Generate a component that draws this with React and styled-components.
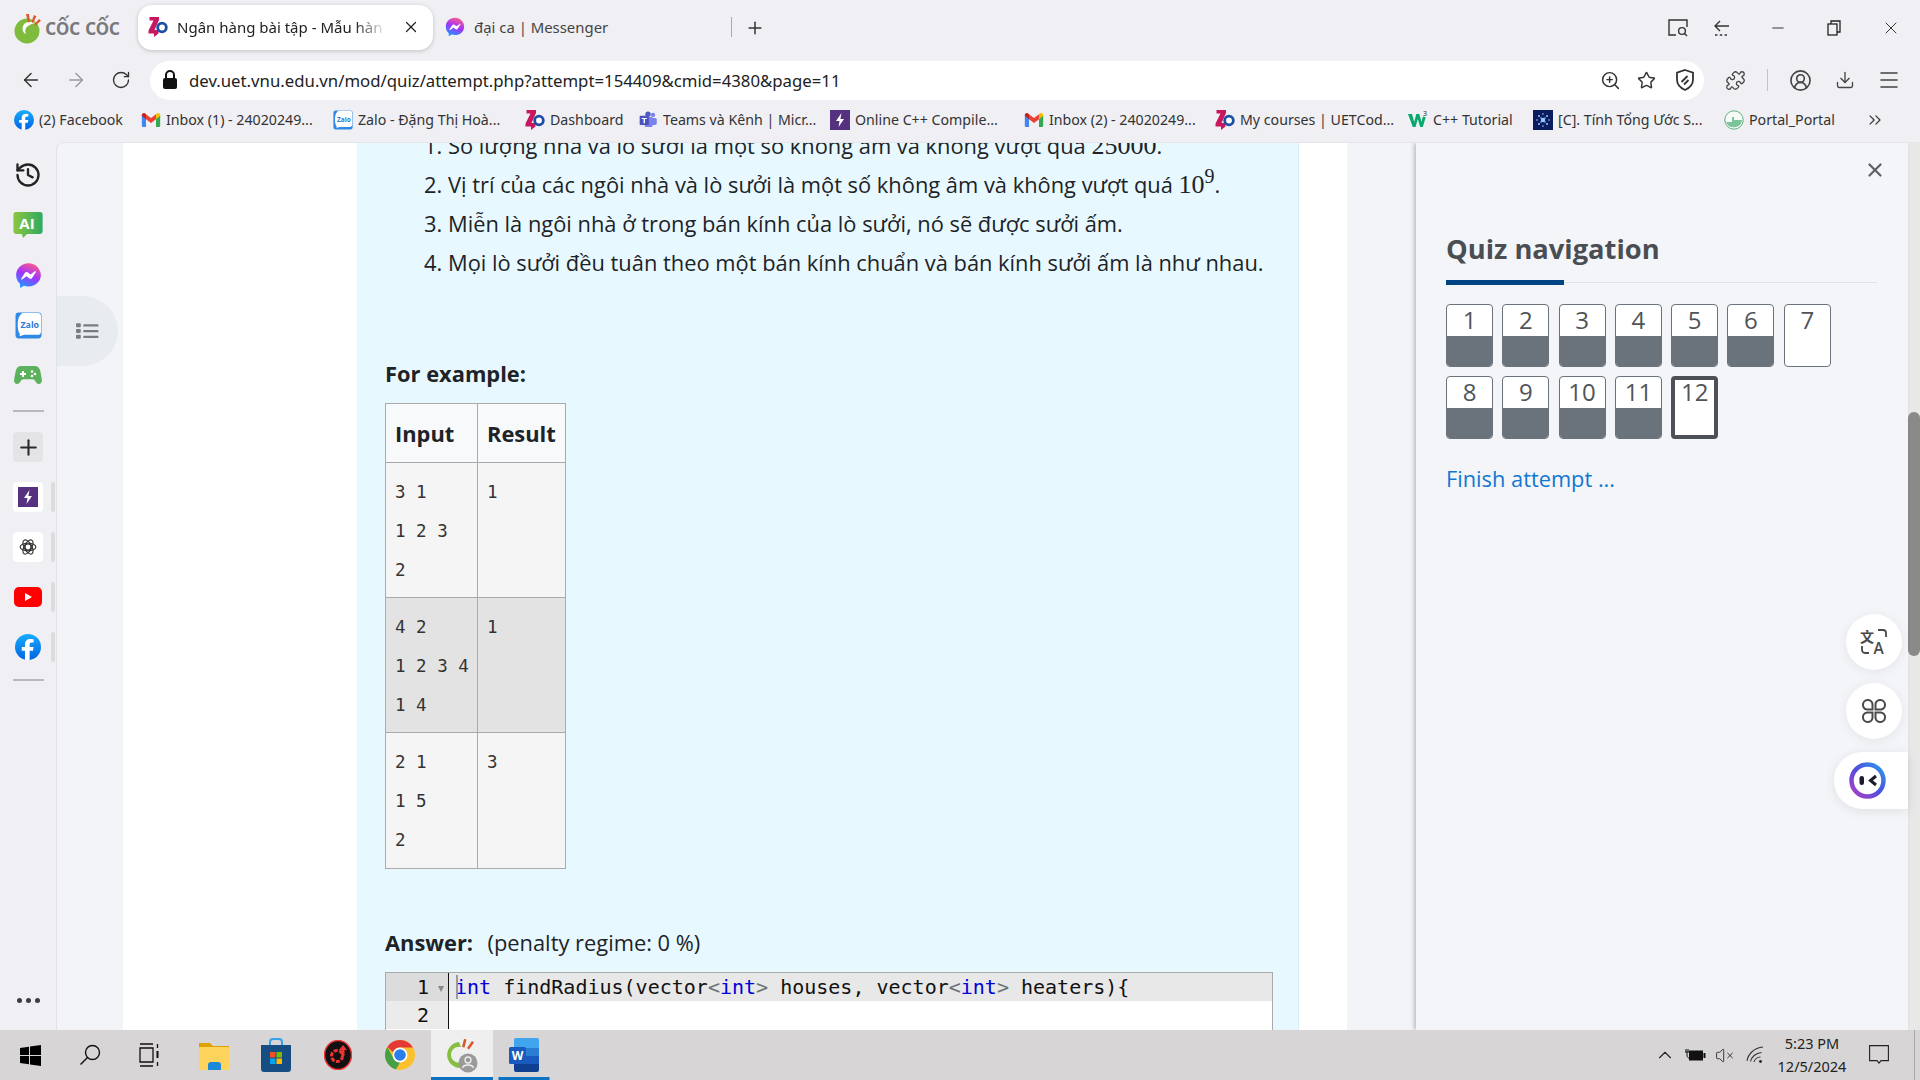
import React from 'react';
import styled, { createGlobalStyle } from 'styled-components';
import { ArrowLeft, ArrowRight, RotateCw, ZoomIn, Star, Puzzle, CircleUserRound, Download, Menu, X, Plus, History, ChevronUp, VolumeX, ChevronsRight, Minus } from 'lucide-react';

const Global = createGlobalStyle`
  html, body { margin: 0; padding: 0; height: 100%; overflow: hidden; background: #efeff4; }
  * { box-sizing: border-box; }
  body { font-family: "Open Sans", "Noto Sans", sans-serif; }
`;
const ChromeFont = `"Noto Sans", "Open Sans", sans-serif`;

const Shell = styled.div`width:1920px;height:1080px;display:flex;flex-direction:column;overflow:hidden;background:#efeff4;`;
const TabStrip = styled.div`height:58px;flex:none;display:flex;align-items:flex-start;padding:5px 0 0 14px;`;
const Logo = styled.div`width:106px;height:45px;display:flex;align-items:center;gap:1px;margin-right:18px;`;
const LogoText = styled.span`font:600 22.5px/1 "Open Sans",sans-serif;color:#77797c;white-space:nowrap;letter-spacing:-.5px;`;
const ActiveTab = styled.div`width:295px;height:45px;background:#fff;border-radius:14px;box-shadow:0 1px 4px rgba(0,0,0,.2);display:flex;align-items:center;padding:0 13px 2px 10px;gap:9px;font:15px ${ChromeFont};color:#222;`;
const TabTitle = styled.span`width:212px;margin-right:auto;overflow:hidden;white-space:nowrap;-webkit-mask-image:linear-gradient(90deg,#000 84%,transparent 99%);mask-image:linear-gradient(90deg,#000 84%,transparent 99%);`;
const Tab = styled.div`width:298px;height:45px;display:flex;align-items:center;gap:9px;padding:0 0 2px 12px;font:14.9px ${ChromeFont};color:#444;`;
const TabSep = styled.div`width:1px;height:20px;background:#a9a9ad;margin-top:12px;`;
const NewTab = styled.div`width:46px;height:45px;display:flex;align-items:center;justify-content:center;color:#333;`;
const WindowControls = styled.div`margin-left:auto;display:flex;align-items:center;height:45px;`;
const WinBtn = styled.div`width:${p=>p.$w}px;display:flex;justify-content:center;color:#222;`;

const Toolbar = styled.div`height:44px;flex:none;display:flex;align-items:center;padding-left:8px;`;
const NavBtn = styled.div`width:45px;flex:none;display:flex;justify-content:center;color:${p=>p.$dim?'#9a9a9e':'#333'};`;
const Address = styled.div`width:1554px;flex:none;height:39px;margin:0 7px 0 7px;background:#fff;border-radius:20px;display:flex;align-items:center;padding:0 0 0 11px;`;
const Url = styled.div`font:16.76px ${ChromeFont};color:#222;margin-left:10px;flex:1;white-space:nowrap;`;
const AddrIcon = styled.div`width:${p=>p.$w||38.5}px;display:flex;justify-content:center;color:#333;`;
const ToolIcons = styled.div`display:flex;align-items:center;flex:none;`;
const ToolIcon = styled.div`width:${p=>p.$w}px;display:flex;justify-content:center;color:#444;`;
const ToolSep = styled.div`width:1px;height:22px;background:#c4c4c8;margin-left:8px;`;

const Bookmarks = styled.div`height:40px;flex:none;display:flex;align-items:center;padding:0 0 5px 14px;`;
const Bookmark = styled.div`width:${p=>p.$w}px;display:flex;align-items:center;gap:5px;font:14.2px ${ChromeFont};color:#333;white-space:nowrap;`;
const More = styled.div`margin-left:14px;display:flex;color:#333;`;

const Main = styled.div`flex:1;min-height:0;display:flex;overflow:hidden;position:relative;`;
const Side = styled.div`width:56px;flex:none;display:flex;flex-direction:column;align-items:center;padding:8px 0 5px;`;
const SideItem = styled.div`width:56px;height:50px;flex:none;position:relative;display:flex;align-items:center;justify-content:center;`;
const SideTile = styled.div`width:30px;height:30px;border-radius:4px;background:${p=>p.$bg||'#fff'};display:flex;align-items:center;justify-content:center;`;
const Handle = styled.div`position:absolute;right:1px;top:10px;width:4px;height:30px;border-radius:2px;background:#dcdcde;`;
const SideDivider = styled.div`width:31px;height:2px;background:#b9b9bd;margin:${p=>p.$m};flex:none;`;
const SideSpacer = styled.div`flex:1;`;
const Dots = styled.div`display:flex;gap:4px;`;
const Dot = styled.i`width:5px;height:5px;border-radius:50%;background:#3a3d42;`;

const Page = styled.div`flex:1;min-width:0;display:flex;background:#f3f4f8;border-left:1px solid #e2e2e6;border-top:1px solid #e6e6ea;border-top-left-radius:8px;overflow:hidden;position:relative;`;
const LeftRail = styled.div`width:66px;flex:none;padding-top:153px;`;
const Pill = styled.div`width:61px;height:70px;background:#e9ecef;border-radius:0 35px 35px 0;display:flex;align-items:center;justify-content:center;`;
const Center = styled.div`width:1224px;flex:none;background:#fff;padding:0 48px 0 234px;`;
const Card = styled.div`height:100%;display:flow-root;overflow:hidden;background:#e7f8fe;padding:0 23px 0 28px;color:#1d2327;font-size:21.86px;line-height:39px;border-right:1px solid #d8eef6;`;
const Clip = styled.div`margin-top:-17px;`;
const List = styled.ol`margin:0 0 72px;padding:0 0 0 63px;`;
const MathText = styled.span`font-family:"Liberation Serif",serif;font-size:26px;`;
const Sup = styled.sup`font-size:20px;line-height:0;`;
const Heading = styled.div`font-weight:700;margin-bottom:10px;`;
const Table = styled.table`border-collapse:collapse;background:#f5f5f5;margin-bottom:54px;`;
const Th = styled.th`border:1px solid #aaa;background:#f8f9fb;padding:9px;text-align:left;height:59px;font-weight:700;width:${p=>p.$w}px;min-width:${p=>p.$w}px;max-width:${p=>p.$w}px;`;
const Td = styled.td`border:1px solid #aaa;background:${p=>p.$alt?'#e3e3e3':'#f5f5f5'};padding:10px 0 0 9px;height:${p=>p.$h}px;vertical-align:top;`;
const Pre = styled.pre`margin:0;font:17.5px/39px "DejaVu Sans Mono",monospace;color:#333;`;
const AnswerRow = styled.div`margin-bottom:10px;white-space:pre;`;
const Strong = styled.b`font-weight:700;`;
const Penalty = styled.span`margin-left:3px;`;
const Editor = styled.div`width:888px;height:70px;border:1px solid #aaa;background:#fff;display:grid;grid-template-columns:63px 1fr;grid-auto-rows:28px;font:20px/28px "DejaVu Sans Mono",monospace;color:#111;`;
const GutterCell = styled.div`background:${p=>p.$active?'#dcdcdc':'#ebebeb'};padding-left:31px;border-right:1px solid #111;position:relative;`;
const Fold = styled.span`position:absolute;left:52px;top:13px;width:0;height:0;border:3.5px solid transparent;border-top:6px solid #888;`;
const CodeLine = styled.div`background:${p=>p.$active?'#e8e8e8':'#fff'};padding-left:6px;white-space:pre;position:relative;`;
const Cursor = styled.i`position:absolute;left:7px;top:2px;width:1.5px;height:24px;background:#9a9a9a;`;
const Kw = styled.span`color:#0000d8;`;
const Ang = styled.span`color:#6a7178;`;

const Gap = styled.div`width:69px;flex:none;background:#f3f4f8;`;
const Drawer = styled.aside`width:492px;flex:none;background:#f3f5f9;box-shadow:-2px 0 4px rgba(0,0,0,.22);padding:0 31px 0 30px;position:relative;z-index:1;`;
const CloseRow = styled.div`height:41px;display:flex;justify-content:flex-end;align-items:flex-end;padding-bottom:3px;margin-right:-9px;color:#5b6166;`;
const Title = styled.h2`margin:46px 0 0 0;font:700 27.3px/38px "Open Sans",sans-serif;color:#4a4e53;`;
const Rule = styled.div`height:5px;margin-top:12px;position:relative;background:linear-gradient(#0000 2px,#dfe2e8 2px,#dfe2e8 3px,#0000 3px);`;
const RuleBar = styled.div`position:absolute;left:0;top:0;width:118px;height:5px;background:#004484;`;
const NavGrid = styled.div`display:flex;flex-wrap:wrap;gap:9px 9.3px;margin-top:19px;width:400px;`;
const NavBtnBox = styled.div`width:47px;height:63px;border:${p=>p.$current?'4px solid #4b5157':'1px solid #6a737b'};border-radius:4px;overflow:hidden;background:#fff;font:24px/1 "Open Sans",sans-serif;color:#4f5459;display:flex;flex-direction:column;align-items:center;`;
const NavNum = styled.div`height:${p=>p.$current?'25px':'31px'};flex:none;display:flex;align-items:center;justify-content:center;padding-bottom:2px;`;
const NavFill = styled.div`align-self:stretch;flex:1;background:${p=>p.$on?'#6a737b':'transparent'};`;
const Finish = styled.div`margin:25px 0 0 0;font:21.8px/30px "Open Sans",sans-serif;color:#1177d1;`;
const ScrollTrack = styled.div`width:12px;flex:none;background:#e8e8e8;position:relative;`;
const Thumb = styled.div`position:absolute;left:0;top:269px;width:12px;height:244px;border-radius:6px;background:#8a8a8a;`;
const Floats = styled.div`position:absolute;right:12px;top:471px;display:flex;flex-direction:column;align-items:flex-end;gap:13px;z-index:2;`;
const FloatBtn = styled.div`width:56px;height:56px;margin-right:6px;border-radius:50%;background:#fff;box-shadow:0 2px 12px rgba(0,0,0,.07);display:flex;align-items:center;justify-content:center;color:#4a4a4a;`;
const FloatPill = styled.div`width:74px;height:57px;border-radius:28px 0 0 28px;background:#fff;box-shadow:0 2px 12px rgba(0,0,0,.09);display:flex;align-items:center;padding-left:15px;`;

const Taskbar = styled.div`height:50px;flex:none;background:#d7d5d5;display:flex;align-items:stretch;position:relative;z-index:3;`;
const TaskBtn = styled.div`width:${p=>p.$w}px;display:flex;align-items:center;justify-content:center;position:relative;background:${p=>p.$active?'#efefef':'transparent'};margin-left:${p=>p.$ml||0}px;`;
const Underline = styled.i`position:absolute;bottom:0;left:50%;transform:translateX(-50%);height:3px;width:${p=>p.$w};background:#0b72c4;`;
const Tray = styled.div`margin-left:auto;display:flex;align-items:stretch;padding-right:12px;position:relative;`;
const TrayItem = styled.div`width:${p=>p.$w}px;display:flex;align-items:center;justify-content:center;color:#222;`;
const Clock = styled.div`width:76px;text-align:center;font:14.5px/23px ${ChromeFont};color:#222;padding-top:2px;white-space:nowrap;`;
const TrayEdge = styled.i`position:absolute;right:5px;top:0;bottom:0;width:1px;background:#a9a9a9;`;

/* ---------- drawings ---------- */
const Zo = ({ s = 20 }) => (
  <svg width={s} height={s} viewBox="0 0 20 20">
    <path d="M1.500 0h9.500v3L6.500 13h4v3.500l-4.500 3.500v-3.500H.5v-3L5.500 3.500h-4z" fill="#c8175f" />
    <circle cx="14" cy="10.500" r="4.300" fill="#fff" stroke="#1d4ea6" strokeWidth="2.800" />
  </svg>
);
const Messenger = ({ s = 20, id = 'm' }) => (
  <svg width={s} height={s} viewBox="0 0 24 24">
    <defs><linearGradient id={id} x1="0.3" y1="1" x2="0.7" y2="0"><stop offset="0" stopColor="#1a9bff" /><stop offset=".5" stopColor="#a033ff" /><stop offset="1" stopColor="#ff5c87" /></linearGradient></defs>
    <path d="M12 1C5.800 1 1 5.500 1 11.600c0 3.200 1.300 6 3.500 7.900V23l3.400-1.900c1.300.4 2.600.6 4.100.6 6.200 0 11-4.500 11-10.100S18.200 1 12 1z" fill={`url(#${id})`} />
    <path d="M5.500 14.800l3.300-5.200c.5-.8 1.600-1 2.400-.4l2.600 2 3.900-2.900c.5-.4 1.200.2.800.7l-3.300 5.200c-.5.8-1.600 1-2.400.4l-2.600-2-3.900 2.900c-.5.4-1.200-.2-.8-.7z" fill="#fff" />
  </svg>
);
const Facebook = ({ s = 20, id = 'f' }) => (
  <svg width={s} height={s} viewBox="0 0 24 24">
    <defs><linearGradient id={id} x1="0" y1="0" x2="0" y2="1"><stop offset="0" stopColor="#18acfe" /><stop offset="1" stopColor="#0163e0" /></linearGradient></defs>
    <circle cx="12" cy="12" r="12" fill={`url(#${id})`} />
    <path d="M16.600 15.400l.6-3.400h-3.700V9.700c0-1 .5-1.900 2-1.900h1.700V4.900s-1.500-.3-3-.3c-3 0-5 1.800-5 5.100V12H6.200v3.400h3v8.400a12 12 0 0 0 4.300 0v-8.400z" fill="#fff" />
  </svg>
);
const Gmail = () => (
  <svg width="20" height="20" viewBox="0 0 24 24">
    <path d="M1 6v13a1.500 1.500 0 0 0 1.500 1.500H6V10z" fill="#4285f4" />
    <path d="M23 6v13a1.500 1.500 0 0 1-1.500 1.500H18V10z" fill="#34a853" />
    <path d="M6 11V5l6 4.600L18 5v6l-6 4.500z" fill="#ea4335" />
    <path d="M1 6.200C1 4 3.500 3 5 4.200L6 5v6L1 7z" fill="#c5221f" />
    <path d="M23 6.200C23 4 20.500 3 19 4.200L18 5v6l5-4z" fill="#fbbc04" />
  </svg>
);
const Zalo = ({ s = 20 }) => (
  <svg width={s} height={s} viewBox="0 0 26 26">
    <rect x="0.5" y="0.5" width="25" height="25" rx="3" fill="#2f8ae6" />
    <path d="M7 1h15a3 3 0 0 1 3 3v15a3 3 0 0 1-3 3H9l-4 1.200c-1 .2-.6-1.200-.2-1.800C3 19 2.600 16 2.600 12 2.600 7 4 3 7 1z" fill="#fff" />
    <text x="14.200" y="15" fontFamily="Open Sans,sans-serif" fontSize="8.500" fontWeight="700" fill="#2f78d8" textAnchor="middle">Zalo</text>
  </svg>
);
const Teams = () => (
  <svg width="20" height="20" viewBox="0 0 24 24">
    <circle cx="18" cy="6" r="2.600" fill="#7b83eb" /><rect x="15" y="9.500" width="7.500" height="8.500" rx="2" fill="#7b83eb" />
    <circle cx="12" cy="5" r="3.200" fill="#5059c9" /><rect x="8" y="8.500" width="9.500" height="12" rx="1.500" fill="#7b83eb" />
    <rect x="2" y="7" width="11" height="11" rx="1" fill="#4b53bc" /><path d="M4.500 9.500h6v1.400H8.400v5H6.700v-5H4.500z" fill="#fff" />
  </svg>
);
const Bolt = ({ s = 20 }) => (
  <svg width={s} height={s} viewBox="0 0 20 20">
    <rect width="20" height="20" fill="#55317f" />
    <path d="M11.500 3L6 11h3.500l-1 6L14 9h-3.600z" fill="#fff" />
  </svg>
);
const W3 = () => (
  <svg width="20" height="20" viewBox="0 0 20 20">
    <path d="M0 4h4l2.200 8L8.300 4h3l2.200 8 1.400-5.400 2.800.7L14.800 17h-2.600L9.800 9l-2.300 8H4.800z" fill="#04aa6d" />
    <text x="15" y="6" fontSize="7" fontFamily="Open Sans" fill="#222">3</text>
  </svg>
);
const Nebula = () => (
  <svg width="20" height="20" viewBox="0 0 20 20">
    <rect width="20" height="20" fill="#0b1d5e" />
    {[[10,10,2.2],[6,6,1],[14,6,1],[6,14,1],[14,14,1],[10,4,.8],[10,16,.8],[4,10,.8],[16,10,.8],[8,8,.8],[12,12,.8],[12,8,.8],[8,12,.8]].map(([x,y,r],i)=><circle key={i} cx={x} cy={y} r={r} fill="#9cc6ff"/>)}
  </svg>
);
const Portal = () => (
  <svg width="20" height="20" viewBox="0 0 20 20">
    <circle cx="10" cy="10" r="9.200" fill="#f6fbf6" stroke="#5fae7e" />
    <path d="M2 12h6V7h2v3h8a8.300 8.300 0 0 1-16 2z" fill="#7cc49a" />
  </svg>
);
const CocCoc = () => (
  <svg width="30" height="32" viewBox="0 0 30 32">
    <circle cx="13" cy="19" r="12.500" fill="#7fbb3c" />
    <path d="M21 11c-3-2-9-2-11.500 2-2 3.300-.8 7.800 2.500 9.300-1.500-3.500-.5-6.500 2-8.300 2.300-1.700 5-2.300 7-3z" fill="#fff" />
    <path d="M12 2l3 0 1 8-2 .4zM20 3l2.400 1.300-3.400 6.700-1.700-1z" fill="#e2572b" />
    <path d="M25 7l2 1.700-5.500 4.800-1.200-1.300z" fill="#e2572b" />
  </svg>
);
const AI = () => (
  <svg width="30" height="28" viewBox="0 0 30 28">
    <defs><linearGradient id="ai" x1="0" y1="0" x2="1" y2="0"><stop offset="0" stopColor="#8cc63f" /><stop offset="1" stopColor="#2faa60" /></linearGradient></defs>
    <path d="M3 1h24a2.600 2.600 0 0 1 2.600 2.600v17A2.600 2.600 0 0 1 27 23H14l-4 4-1.200-4H3A2.600 2.600 0 0 1 .4 20.600v-17A2.600 2.600 0 0 1 3 1z" fill="url(#ai)" />
    <text x="14" y="17.500" fontFamily="Open Sans,sans-serif" fontWeight="700" fontSize="15" fill="#fff" textAnchor="middle">AI</text>
  </svg>
);
const Gamepad = () => (
  <svg width="28" height="20" viewBox="0 0 28 20">
    <path d="M7.500 1h13c3.300 0 5 1.800 5.900 5.500L27.800 14c.6 3.300-1 5-2.800 5-1.600 0-2.700-1-3.800-3-.6-1-1.400-1.700-2.700-1.700h-9c-1.300 0-2.100.7-2.700 1.700-1.100 2-2.200 3-3.800 3-1.800 0-3.400-1.700-2.800-5L1.600 6.500C2.500 2.800 4.200 1 7.500 1z" fill="#5cb25c" />
    <path d="M6 8h2V6h2v2h2v2h-2v2H8v-2H6z" fill="#fff" />
    <circle cx="18" cy="6.500" r="1.300" fill="#fff" /><circle cx="21" cy="9" r="1.300" fill="#fff" /><circle cx="18" cy="11" r="1.300" fill="#fff" />
  </svg>
);
const ChatGPT = () => (
  <svg width="18" height="18" viewBox="0 0 24 24" fill="none" stroke="#333" strokeWidth="1.500">
    <circle cx="12" cy="12" r="4" /><ellipse cx="12" cy="12" rx="10.500" ry="5" /><ellipse cx="12" cy="12" rx="10.500" ry="5" transform="rotate(60 12 12)" /><ellipse cx="12" cy="12" rx="10.500" ry="5" transform="rotate(120 12 12)" />
  </svg>
);
const YouTube = () => (
  <svg width="28" height="20" viewBox="0 0 28 20">
    <rect width="28" height="20" rx="5" fill="#f00" /><path d="M11 6l7 4-7 4z" fill="#fff" />
  </svg>
);
const ListIcon = () => (
  <svg width="23" height="20" viewBox="0 0 24 20" fill="#7a7d80">
    <rect x="0" y="2" width="5" height="4" rx="1" /><rect x="0" y="8" width="5" height="4" rx="1" /><rect x="0" y="14" width="5" height="4" rx="1" />
    <rect x="7.500" y="3" width="16" height="2.400" rx="1" /><rect x="7.500" y="9" width="16" height="2.400" rx="1" /><rect x="7.500" y="15" width="16" height="2.400" rx="1" />
  </svg>
);
const LockIcon = () => (
  <svg width="18" height="22" viewBox="0 0 18 22">
    <path d="M5 9V6a4 4 0 0 1 8 0v3" fill="none" stroke="#111" strokeWidth="2" /><rect x="2" y="9" width="14" height="11" rx="2" fill="#111" />
  </svg>
);
const Shield = () => (
  <svg width="22" height="24" viewBox="0 0 22 24" fill="none" stroke="#333" strokeWidth="1.800">
    <path d="M11 2l8 2.600v7c0 5-3.500 8.500-8 10.400-4.500-1.900-8-5.400-8-10.400v-7z" /><path d="M7.500 14l6-6M10 16.500l4.500-4.500" />
  </svg>
);
const FindPage = () => (
  <svg width="22" height="20" viewBox="0 0 22 20" fill="none" stroke="#333" strokeWidth="1.400">
    <path d="M9 17H2V2h18v7" /><circle cx="15" cy="13" r="3.400" /><path d="M17.500 15.500L20 18" />
  </svg>
);
const BackDots = () => (
  <svg width="20" height="20" viewBox="0 0 20 20" fill="none" stroke="#333" strokeWidth="1.400">
    <path d="M8 3L3 8l5 5M3 8h14" /><path d="M3 17h14" strokeDasharray="2.400 2.400" />
  </svg>
);
const Restore = () => (
  <svg width="16" height="16" viewBox="0 0 16 16" fill="none" stroke="#222" strokeWidth="1.300">
    <rect x="2" y="4" width="9" height="11" /><path d="M5 4V1h9v11h-3" />
  </svg>
);
const Translate = () => (
  <svg width="28" height="28" viewBox="0 0 28 28" fill="none" stroke="#4a4a4a" strokeWidth="1.800">
    <text x="0" y="14" fontSize="14" fontFamily="Noto Sans CJK SC" fontWeight="700" fill="#4a4a4a" stroke="none">文</text>
    <text x="13.500" y="26" fontSize="15.500" fontFamily="Open Sans" fontWeight="600" fill="#4a4a4a" stroke="none">A</text>
    <path d="M18 2h5a3 3 0 0 1 3 3v4" /><path d="M9 25H5a3 3 0 0 1-3-3v-4" />
  </svg>
);
const Clover = () => (
  <svg width="26" height="26" viewBox="0 0 26 26" fill="none" stroke="#4a4a4a" strokeWidth="2">
    <path d="M11.500 11.500H6A4.800 4.800 0 1 1 11.500 6z" /><path d="M14.500 11.500H20A4.800 4.800 0 1 0 14.500 6z" />
    <path d="M11.500 14.500H6A4.800 4.800 0 1 0 11.500 20z" /><path d="M14.500 14.500H20A4.800 4.800 0 1 1 14.500 20z" />
  </svg>
);
const BotRing = () => (
  <svg width="37" height="37" viewBox="0 0 37 37">
    <defs><linearGradient id="ring" x1="0" y1="1" x2="1" y2="0"><stop offset="0" stopColor="#b03fc4" /><stop offset=".5" stopColor="#4f4ee0" /><stop offset="1" stopColor="#2a9bea" /></linearGradient></defs>
    <circle cx="18.500" cy="18.500" r="16" fill="#fff" stroke="url(#ring)" strokeWidth="4.500" />
    <rect x="10.500" y="14" width="4.500" height="9" rx="2.200" fill="#1c1c2a" />
    <path d="M27 14l-5.500 4.500 5.500 4.500" fill="none" stroke="#1c1c2a" strokeWidth="3" />
  </svg>
);
const Windows = () => (
  <svg width="21" height="21" viewBox="0 0 21 21" fill="#000">
    <path d="M0 3l9-1.300V10H0zM10 1.500L21 0v10H10zM0 11h9v8.300L0 18zM10 11h11v10l-11-1.500z" />
  </svg>
);
const SearchGlass = () => (
  <svg width="22" height="22" viewBox="0 0 22 22" fill="none" stroke="#111" strokeWidth="1.400">
    <circle cx="13.500" cy="8.500" r="7" /><path d="M8.500 13.500L1.500 20.500" />
  </svg>
);
const TaskView = () => (
  <svg width="22" height="24" viewBox="0 0 22 24" fill="none" stroke="#111" strokeWidth="1.300">
    <path d="M1 1h13M1 23h13M1 5h13v14H1zM18.500 1v4M18.500 19v4" /><rect x="17.500" y="8" width="2" height="7" fill="#111" stroke="none" />
  </svg>
);
const Folder = () => (
  <svg width="30" height="30" viewBox="0 0 30 30">
    <path d="M0 3h11l3 3h16v4H0z" fill="#e0a100" /><rect y="7" width="30" height="23" rx="1" fill="#ffd45c" />
    <path d="M9 25c0-2 1-3 3-3h7c2 0 3 1 3 3v5H9z" fill="#1b88d8" />
  </svg>
);
const Store = () => (
  <svg width="30" height="34" viewBox="0 0 30 34">
    <path d="M9 8V4a3 3 0 0 1 3-3h6a3 3 0 0 1 3 3v4" fill="none" stroke="#35a3e8" strokeWidth="2" />
    <path d="M0 7h30v24a3 3 0 0 1-3 3H3a3 3 0 0 1-3-3z" fill="#164e84" />
    <rect x="9" y="14" width="5.500" height="5.500" fill="#f25022" /><rect x="15.500" y="14" width="5.500" height="5.500" fill="#7fba00" />
    <rect x="9" y="20.500" width="5.500" height="5.500" fill="#00a4ef" /><rect x="15.500" y="20.500" width="5.500" height="5.500" fill="#ffb900" />
  </svg>
);
const RedBoost = () => (
  <svg width="28" height="30" viewBox="0 0 28 30">
    <ellipse cx="14" cy="15" rx="13.500" ry="14.500" fill="#111" stroke="#e33" strokeWidth="1.500" />
    <circle cx="13" cy="16" r="5.500" fill="none" stroke="#e33" strokeWidth="3" strokeDasharray="4 1.500" />
    <path d="M19 5l4 5h-2.500v6h-3v-6H15z" fill="#e33" />
  </svg>
);
const Chrome = () => (
  <svg width="30" height="30" viewBox="0 0 30 30">
    <circle cx="15" cy="15" r="15" fill="#fbc02d" />
    <path d="M15 0a15 15 0 0 1 13 7.500H15a7.500 7.500 0 0 0-7 4.700L2.300 7A15 15 0 0 1 15 0z" fill="#e53935" />
    <path d="M2.300 7L8.800 18.700a7.500 7.500 0 0 0 6.200 3.800L10.800 29.400A15 15 0 0 1 2.300 7z" fill="#43a047" />
    <circle cx="15" cy="15" r="7.500" fill="#fff" /><circle cx="15" cy="15" r="5.800" fill="#2b7de9" />
  </svg>
);
const CocTask = () => (
  <svg width="34" height="36" viewBox="0 0 34 36">
    <path d="M14 5a13 13 0 1 0 8 24l-3-5a8 8 0 1 1-3-14z" fill="#86bf3f" />
    <path d="M17 10l2-8 2.500.5-2 8zM22 11l5-7 2 1.500-5 7z" fill="#d9572b" />
    <circle cx="23" cy="26" r="9.500" fill="#9a9a9a" />
    <circle cx="23" cy="23" r="3" fill="none" stroke="#eee" strokeWidth="1.300" /><path d="M17.500 31c1-4 10-4 11 0" fill="none" stroke="#eee" strokeWidth="1.300" />
  </svg>
);
const Word = () => (
  <svg width="30" height="34" viewBox="0 0 30 34">
    <path d="M7 0h21a2 2 0 0 1 2 2v8H5V2a2 2 0 0 1 2-2z" fill="#41a5ee" /><rect x="5" y="10" width="25" height="8" fill="#2b7cd3" /><rect x="5" y="18" width="25" height="8" fill="#185abd" />
    <path d="M5 26h25v6a2 2 0 0 1-2 2H7a2 2 0 0 1-2-2z" fill="#103f91" />
    <rect x="0" y="9" width="17" height="17" rx="1.500" fill="#185abd" />
    <text x="8.500" y="22" fontFamily="Open Sans" fontWeight="700" fontSize="12" fill="#fff" textAnchor="middle">W</text>
  </svg>
);
const Battery = () => (
  <svg width="22" height="14" viewBox="0 0 22 14">
    <rect x="5" y="2.500" width="14" height="10" fill="#111" /><rect x="19.500" y="5" width="2" height="5" fill="#111" />
    <path d="M1 4h4M2 1v3M4 1v3M3 4v3c0 2 1 3 2 3" fill="none" stroke="#111" />
  </svg>
);
const WifiTray = () => (
  <svg width="20" height="18" viewBox="0 0 20 18" fill="none" stroke="#333" strokeWidth="1.100">
    <path d="M1 15C2 8 8 2 17 1M4.500 15.500c1-4.500 5-8.500 11-9M8 16c.5-2.500 3-5 6.500-5" /><circle cx="14.500" cy="15.500" r="1.400" fill="#222" stroke="none" />
  </svg>
);
const Bubble = () => (
  <svg width="20" height="20" viewBox="0 0 20 20" fill="none" stroke="#222" strokeWidth="1.100">
    <path d="M.6.6h18.800v15H12l-2 2.500-2-2.500H.6z" />
  </svg>
);

const marks = [
  { w: 127, icon: <Facebook id="f1" />, t: '(2) Facebook' },
  { w: 192, icon: <Gmail />, t: 'Inbox (1) - 24020249...' },
  { w: 192, icon: <Zalo />, t: 'Zalo - Đặng Thị Hoà...' },
  { w: 113, icon: <Zo />, t: 'Dashboard' },
  { w: 192, icon: <Teams />, t: 'Teams và Kênh | Micr...' },
  { w: 194, icon: <Bolt />, t: 'Online C++ Compile...' },
  { w: 191, icon: <Gmail />, t: 'Inbox (2) - 24020249...' },
  { w: 193, icon: <Zo />, t: 'My courses | UETCod...' },
  { w: 125, icon: <W3 />, t: 'C++ Tutorial' },
  { w: 191, icon: <Nebula />, t: '[C]. Tính Tổng Ước S...' },
  { w: 127, icon: <Portal />, t: 'Portal_Portal' },
];
const rows = [{ a: '3 1\n1 2 3\n2', b: '1', h: 135 }, { a: '4 2\n1 2 3 4\n1 4', b: '1', h: 135 }, { a: '2 1\n1 5\n2', b: '3', h: 136 }];
const nav = Array.from({ length: 12 }, (_, i) => i + 1);

export default function App() {
  return (
    <Shell>
      <Global />
      <TabStrip>
        <Logo><CocCoc /><LogoText>cốc cốc</LogoText></Logo>
        <ActiveTab><Zo /><TabTitle>Ngân hàng bài tập - Mẫu hàn</TabTitle><X size={18} strokeWidth={1.6} /></ActiveTab>
        <Tab><Messenger id="m1" /><span>đại ca | Messenger</span></Tab>
        <TabSep />
        <NewTab><Plus size={20} strokeWidth={1.8} /></NewTab>
        <WindowControls>
          <WinBtn $w={34}><FindPage /></WinBtn>
          <WinBtn $w={54}><BackDots /></WinBtn>
          <WinBtn $w={57}><Minus size={18} strokeWidth={1.2} /></WinBtn>
          <WinBtn $w={56}><Restore /></WinBtn>
          <WinBtn $w={58}><X size={20} strokeWidth={1.1} /></WinBtn>
        </WindowControls>
      </TabStrip>
      <Toolbar>
        <NavBtn><ArrowLeft size={22} strokeWidth={1.6} /></NavBtn>
        <NavBtn $dim><ArrowRight size={22} strokeWidth={1.6} /></NavBtn>
        <NavBtn><RotateCw size={20} strokeWidth={1.6} /></NavBtn>
        <Address>
          <LockIcon />
          <Url>dev.uet.vnu.edu.vn/mod/quiz/attempt.php?attempt=154409&amp;cmid=4380&amp;page=11</Url>
          <AddrIcon $w={34}><ZoomIn size={21} strokeWidth={1.7} /></AddrIcon>
          <AddrIcon><Star size={19} strokeWidth={1.8} /></AddrIcon>
          <AddrIcon><Shield /></AddrIcon>
        </Address>
        <ToolIcons>
          <ToolIcon $w={48}><Puzzle size={21} strokeWidth={1.5} /></ToolIcon>
          <ToolSep />
          <ToolIcon $w={64}><CircleUserRound size={23} strokeWidth={1.7} /></ToolIcon>
          <ToolIcon $w={26}><Download size={20} strokeWidth={1.6} /></ToolIcon>
          <ToolIcon $w={62}><Menu size={24} strokeWidth={1.6} /></ToolIcon>
        </ToolIcons>
      </Toolbar>
      <Bookmarks>
        {marks.map((m) => <Bookmark key={m.t} $w={m.w}>{m.icon}<span>{m.t}</span></Bookmark>)}
        <More><ChevronsRight size={20} strokeWidth={1.4} /></More>
      </Bookmarks>
      <Main>
        <Side>
          <SideItem><History size={28} strokeWidth={2} color="#222" /></SideItem>
          <SideItem><AI /></SideItem>
          <SideItem><Messenger s={27} id="m2" /></SideItem>
          <SideItem><Zalo s={27} /></SideItem>
          <SideItem><Gamepad /></SideItem>
          <SideDivider $m="10px 0" />
          <SideItem><SideTile $bg="#e4e4e6"><Plus size={25} strokeWidth={2} color="#2a2a2a" /></SideTile></SideItem>
          <SideItem><SideTile><Bolt /></SideTile><Handle /></SideItem>
          <SideItem><SideTile><ChatGPT /></SideTile><Handle /></SideItem>
          <SideItem><YouTube /><Handle /></SideItem>
          <SideItem><Facebook s={26} id="f2" /><Handle /></SideItem>
          <SideDivider $m="7px 0 0" />
          <SideSpacer />
          <SideItem><Dots><Dot /><Dot /><Dot /></Dots></SideItem>
        </Side>
        <Page>
          <LeftRail><Pill><ListIcon /></Pill></LeftRail>
          <Center>
            <Card>
              <Clip>
                <List>
                  <li>Số lượng nhà và lò sưởi là một số không âm và không vượt quá <MathText>25000</MathText>.</li>
                  <li>Vị trí của các ngôi nhà và lò sưởi là một số không âm và không vượt quá <MathText>10<Sup>9</Sup></MathText>.</li>
                  <li>Miễn là ngôi nhà ở trong bán kính của lò sưởi, nó sẽ được sưởi ấm.</li>
                  <li>Mọi lò sưởi đều tuân theo một bán kính chuẩn và bán kính sưởi ấm là như nhau.</li>
                </List>
                <Heading>For example:</Heading>
                <Table>
                  <thead><tr><Th $w={92}>Input</Th><Th $w={88}>Result</Th></tr></thead>
                  <tbody>
                    {rows.map((r, i) => (
                      <tr key={i}>
                        <Td $alt={i === 1} $h={r.h}><Pre>{r.a}</Pre></Td>
                        <Td $alt={i === 1} $h={r.h}><Pre>{r.b}</Pre></Td>
                      </tr>
                    ))}
                  </tbody>
                </Table>
                <AnswerRow><Strong>Answer:</Strong>  <Penalty>(penalty regime: 0 %)</Penalty></AnswerRow>
                <Editor>
                  <GutterCell $active>1<Fold /></GutterCell>
                  <CodeLine $active><Cursor /><Kw>int</Kw> findRadius(vector<Ang>&lt;</Ang><Kw>int</Kw><Ang>&gt;</Ang> houses, vector<Ang>&lt;</Ang><Kw>int</Kw><Ang>&gt;</Ang> heaters){'{'}</CodeLine>
                  <GutterCell>2</GutterCell>
                  <CodeLine />
                </Editor>
              </Clip>
            </Card>
          </Center>
          <Gap />
          <Drawer>
            <CloseRow><X size={22} strokeWidth={2.4} /></CloseRow>
            <Title>Quiz navigation</Title>
            <Rule><RuleBar /></Rule>
            <NavGrid>
              {nav.map((n) => (
                <NavBtnBox key={n} $current={n === 12}>
                  <NavNum $current={n === 12}>{n}</NavNum>
                  <NavFill $on={n !== 7 && n !== 12} />
                </NavBtnBox>
              ))}
            </NavGrid>
            <Finish>Finish attempt ...</Finish>
          </Drawer>
          <ScrollTrack><Thumb /></ScrollTrack>
          <Floats>
            <FloatBtn><Translate /></FloatBtn>
            <FloatBtn><Clover /></FloatBtn>
            <FloatPill><BotRing /></FloatPill>
          </Floats>
        </Page>
      </Main>
      <Taskbar>
        <TaskBtn $w={60}><Windows /></TaskBtn>
        <TaskBtn $w={60}><SearchGlass /></TaskBtn>
        <TaskBtn $w={60}><TaskView /></TaskBtn>
        <TaskBtn $w={62} $ml={3}><Folder /></TaskBtn>
        <TaskBtn $w={62}><Store /></TaskBtn>
        <TaskBtn $w={62}><RedBoost /></TaskBtn>
        <TaskBtn $w={62}><Chrome /></TaskBtn>
        <TaskBtn $w={62} $active><CocTask /><Underline $w="100%" /></TaskBtn>
        <TaskBtn $w={62}><Word /><Underline $w="51px" /></TaskBtn>
        <Tray>
          <TrayItem $w={30}><ChevronUp size={22} strokeWidth={1.2} /></TrayItem>
          <TrayItem $w={30}><Battery /></TrayItem>
          <TrayItem $w={28}><VolumeX size={19} strokeWidth={1.1} /></TrayItem>
          <TrayItem $w={36}><WifiTray /></TrayItem>
          <Clock>5:23 PM<br />12/5/2024</Clock>
          <TrayItem $w={58}><Bubble /></TrayItem>
          <TrayEdge />
        </Tray>
      </Taskbar>
    </Shell>
  );
}
